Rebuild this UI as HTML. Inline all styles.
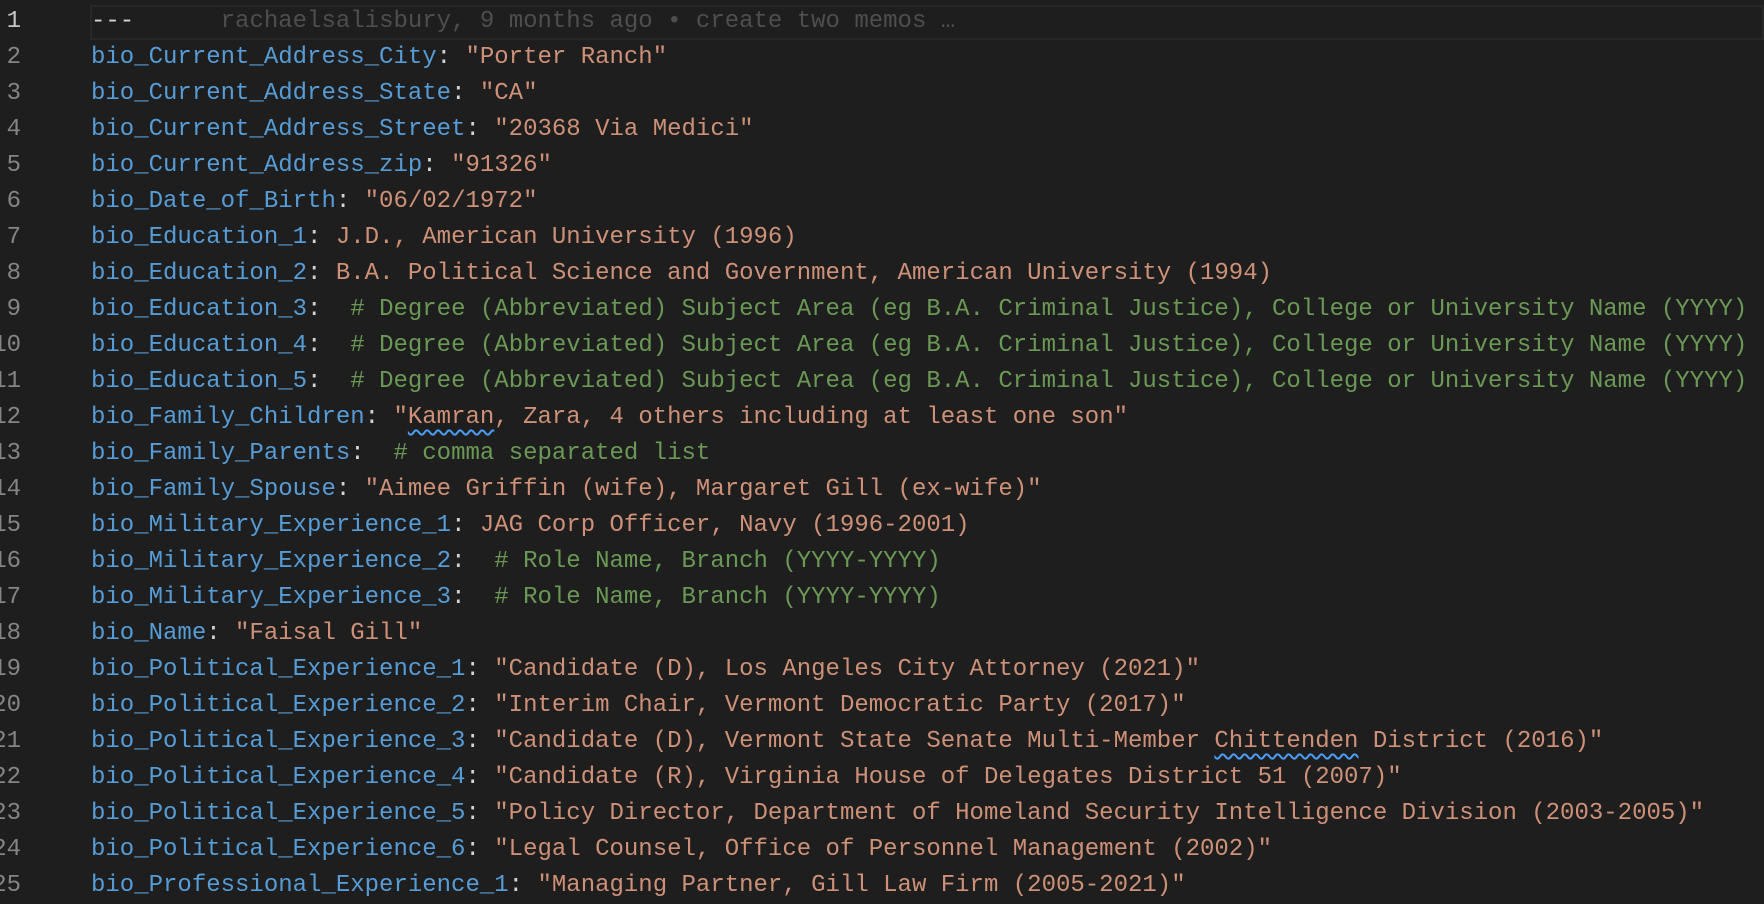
<!DOCTYPE html>
<html><head><meta charset="utf-8"><style>
html,body{margin:0;padding:0;background:#1e1e1e;width:1764px;height:904px;overflow:hidden}
.ed{position:relative;font-family:"Liberation Mono",monospace;font-size:24px;line-height:36px;padding-top:4px}
.l{position:relative;height:36px;white-space:pre}
.n{position:absolute;right:1743px;top:0;color:#858585;text-align:right}
.t{position:absolute;left:91px;top:0;color:#d4d4d4}
.k{color:#569cd6}.s{color:#ce9178}.c{color:#6a9955}.p{color:#d4d4d4}
.b{color:#4e4e4e}
.cur{position:absolute;left:90px;right:0;top:1px;height:35px;border:2px solid #282828;box-sizing:border-box}
.sq{text-decoration:underline wavy #4a9df8;text-decoration-thickness:1.5px;text-underline-offset:6px}
</style></head><body><div class="ed">
<div class="l"><div class="cur"></div><span class="n" style="color:#c6c6c6">1</span><span class="t"><span class="p">---</span>      <span class="b">rachaelsalisbury, 9 months ago • create two memos …</span></span></div>
<div class="l"><span class="n">2</span><span class="t"><span class="k">bio_Current_Address_City</span>: <span class="s">"Porter Ranch"</span></span></div>
<div class="l"><span class="n">3</span><span class="t"><span class="k">bio_Current_Address_State</span>: <span class="s">"CA"</span></span></div>
<div class="l"><span class="n">4</span><span class="t"><span class="k">bio_Current_Address_Street</span>: <span class="s">"20368 Via Medici"</span></span></div>
<div class="l"><span class="n">5</span><span class="t"><span class="k">bio_Current_Address_zip</span>: <span class="s">"91326"</span></span></div>
<div class="l"><span class="n">6</span><span class="t"><span class="k">bio_Date_of_Birth</span>: <span class="s">"06/02/1972"</span></span></div>
<div class="l"><span class="n">7</span><span class="t"><span class="k">bio_Education_1</span>: <span class="s">J.D., American University (1996)</span></span></div>
<div class="l"><span class="n">8</span><span class="t"><span class="k">bio_Education_2</span>: <span class="s">B.A. Political Science and Government, American University (1994)</span></span></div>
<div class="l"><span class="n">9</span><span class="t"><span class="k">bio_Education_3</span>:  <span class="c"># Degree (Abbreviated) Subject Area (eg B.A. Criminal Justice), College or University Name (YYYY)</span></span></div>
<div class="l"><span class="n">10</span><span class="t"><span class="k">bio_Education_4</span>:  <span class="c"># Degree (Abbreviated) Subject Area (eg B.A. Criminal Justice), College or University Name (YYYY)</span></span></div>
<div class="l"><span class="n">11</span><span class="t"><span class="k">bio_Education_5</span>:  <span class="c"># Degree (Abbreviated) Subject Area (eg B.A. Criminal Justice), College or University Name (YYYY)</span></span></div>
<div class="l"><span class="n">12</span><span class="t"><span class="k">bio_Family_Children</span>: <span class="s">"<span class="sq">Kamran</span>, Zara, 4 others including at least one son"</span></span></div>
<div class="l"><span class="n">13</span><span class="t"><span class="k">bio_Family_Parents</span>:  <span class="c"># comma separated list</span></span></div>
<div class="l"><span class="n">14</span><span class="t"><span class="k">bio_Family_Spouse</span>: <span class="s">"Aimee Griffin (wife), Margaret Gill (ex-wife)"</span></span></div>
<div class="l"><span class="n">15</span><span class="t"><span class="k">bio_Military_Experience_1</span>: <span class="s">JAG Corp Officer, Navy (1996-2001)</span></span></div>
<div class="l"><span class="n">16</span><span class="t"><span class="k">bio_Military_Experience_2</span>:  <span class="c"># Role Name, Branch (YYYY-YYYY)</span></span></div>
<div class="l"><span class="n">17</span><span class="t"><span class="k">bio_Military_Experience_3</span>:  <span class="c"># Role Name, Branch (YYYY-YYYY)</span></span></div>
<div class="l"><span class="n">18</span><span class="t"><span class="k">bio_Name</span>: <span class="s">"Faisal Gill"</span></span></div>
<div class="l"><span class="n">19</span><span class="t"><span class="k">bio_Political_Experience_1</span>: <span class="s">"Candidate (D), Los Angeles City Attorney (2021)"</span></span></div>
<div class="l"><span class="n">20</span><span class="t"><span class="k">bio_Political_Experience_2</span>: <span class="s">"Interim Chair, Vermont Democratic Party (2017)"</span></span></div>
<div class="l"><span class="n">21</span><span class="t"><span class="k">bio_Political_Experience_3</span>: <span class="s">"Candidate (D), Vermont State Senate Multi-Member <span class="sq">Chittenden</span> District (2016)"</span></span></div>
<div class="l"><span class="n">22</span><span class="t"><span class="k">bio_Political_Experience_4</span>: <span class="s">"Candidate (R), Virginia House of Delegates District 51 (2007)"</span></span></div>
<div class="l"><span class="n">23</span><span class="t"><span class="k">bio_Political_Experience_5</span>: <span class="s">"Policy Director, Department of Homeland Security Intelligence Division (2003-2005)"</span></span></div>
<div class="l"><span class="n">24</span><span class="t"><span class="k">bio_Political_Experience_6</span>: <span class="s">"Legal Counsel, Office of Personnel Management (2002)"</span></span></div>
<div class="l"><span class="n">25</span><span class="t"><span class="k">bio_Professional_Experience_1</span>: <span class="s">"Managing Partner, Gill Law Firm (2005-2021)"</span></span></div>
</div></body></html>
